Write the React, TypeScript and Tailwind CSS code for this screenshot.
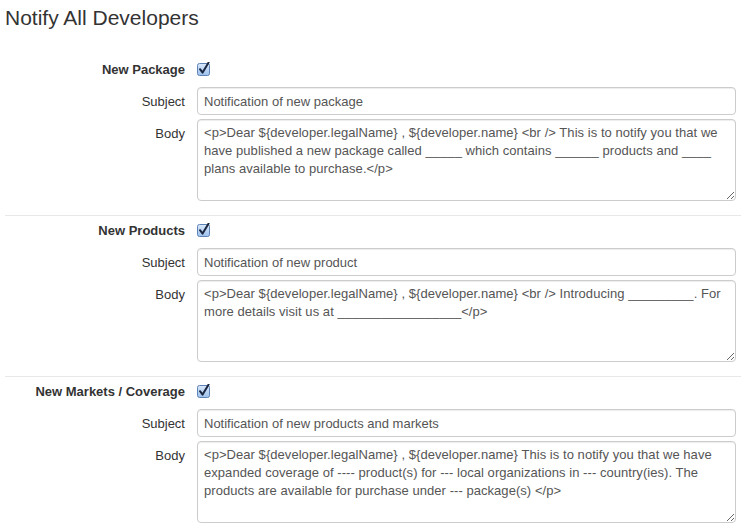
import React from 'react';

interface Notice {
  id: string;
  title: string;
  subject: string;
  body: string;
}

const notices: Notice[] = [
  {
    id: 'package',
    title: 'New Package',
    subject: 'Notification of new package',
    body: '<p>Dear ${developer.legalName} , ${developer.name} <br /> This is to notify you that we have published a new package called _____ which contains ______ products and ____ plans available to purchase.</p>',
  },
  {
    id: 'products',
    title: 'New Products',
    subject: 'Notification of new product',
    body: '<p>Dear ${developer.legalName} , ${developer.name} <br /> Introducing _________. For more details visit us at _________________</p>',
  },
  {
    id: 'markets',
    title: 'New Markets / Coverage',
    subject: 'Notification of new products and markets',
    body: '<p>Dear ${developer.legalName} , ${developer.name} This is to notify you that we have expanded coverage of ---- product(s) for --- local organizations in --- country(ies). The products are available for purchase under --- package(s) </p>',
  },
];

function CheckMark() {
  return (
    <svg width="14" height="14" viewBox="0 0 14 14" className="block">
      <defs>
        <linearGradient id="cbfill" x1="0" y1="0" x2="0" y2="1">
          <stop offset="0" stopColor="#dbe9fb" />
          <stop offset="1" stopColor="#9cc0ec" />
        </linearGradient>
      </defs>
      <rect x="0.5" y="1.5" width="12" height="12" rx="2" fill="url(#cbfill)" stroke="#5d82b5" />
      <path d="M3 7.2 L5.6 10.6 L11.6 0.6" fill="none" stroke="#1b2740" strokeWidth="2" strokeLinecap="round" strokeLinejoin="round" />
    </svg>
  );
}

function NoticeSection({ notice, first }: { notice: Notice; first: boolean }) {
  return (
    <div className={first ? 'mt-[27px]' : 'mt-[14px] border-t border-[#e8e8e8] pt-[4px]'}>
      <div className="flex h-5 items-center">
        <label className="w-[180px] pt-px text-right font-bold">{notice.title}</label>
        <span className="ml-3">
          <CheckMark />
        </span>
      </div>

      <div className="mt-2 flex items-center pr-[5px]">
        <label className="w-[180px] pt-px text-right">Subject</label>
        <input
          type="text"
          defaultValue={notice.subject}
          className="ml-3 h-[28px] flex-1 rounded-[4px] border border-[#cccccc] bg-white px-[6px] text-[13px] text-[#555555] shadow-[inset_0_1px_1px_rgba(0,0,0,0.075)] outline-none"
        />
      </div>

      <div className="mt-1 flex items-start pr-[5px]">
        <label className="w-[180px] pt-[6px] text-right leading-[18px]">Body</label>
        <textarea
          defaultValue={notice.body}
          className="ml-3 h-[82px] flex-1 rounded-[4px] border border-[#cccccc] bg-white px-[6px] py-[4px] text-[13px] leading-[18px] tracking-[0.05px] text-[#555555] shadow-[inset_0_1px_1px_rgba(0,0,0,0.075)] outline-none"
        />
      </div>
    </div>
  );
}

export default function App() {
  return (
    <div className="min-h-screen bg-white pl-[5px] font-['Liberation_Sans',Arial,sans-serif] text-[13px] text-[#333333]">
      <h1 className="mt-[4px] text-[21px] font-normal leading-[28px] text-[#333333]">Notify All Developers</h1>
      {notices.map((n, i) => (
        <NoticeSection key={n.id} notice={n} first={i === 0} />
      ))}
    </div>
  );
}
